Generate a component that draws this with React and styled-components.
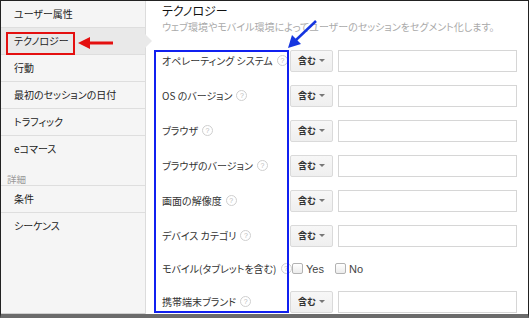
import React from "react";
import styled, {createGlobalStyle} from "styled-components";

const GlobalStyle = createGlobalStyle`
  html, body {
    margin: 0;
    padding: 0;
    background: #fff;
  }
  body {
    font-family: "Noto Sans CJK JP", "Liberation Sans", sans-serif;
    font-feature-settings: "palt";
  }
`

const Frame = styled.div`
  position: relative;
  width: 529px;
  height: 318px;
  box-sizing: border-box;
  border-top: 1px solid #222;
  border-left: 1px solid #222;
  border-right: 1px solid #222;
  border-bottom: 4px solid #6b6b6b;
  display: flex;
  overflow: hidden;
  background: #fff;
`

const Sidebar = styled.div`
  width: 144px;
  flex: none;
  background: #f5f5f5;
  border-right: 1px solid #dcdcdc;
  box-shadow: inset 0 -1px 0 #d0d0d0;
`

const Group = styled.div`
  border-top: ${p => p.$top ? "1px solid #dedede" : "none"};
`

const Item = styled.div`
  position: relative;
  height: 26px;
  line-height: 26px;
  padding-left: 13px;
  font-size: 10px;
  color: #222;
  border-bottom: ${p => p.$last ? "none" : "1px solid #dedede"};
  background: ${p => p.$active ? "#e9e9e9" : "transparent"};

  ${p => p.$active && `
    &::after {
      content: "";
      position: absolute;
      right: -7px;
      top: 6px;
      width: 0;
      height: 0;
      border-top: 7px solid transparent;
      border-bottom: 7px solid transparent;
      border-left: 7px solid #e9e9e9;
    }
  `}
`

const GroupLabel = styled.div`
  height: 23px;
  padding-left: 6px;
  font-size: 9.5px;
  line-height: 12px;
  color: #999;
  display: flex;
  align-items: flex-end;
  box-sizing: border-box;
`

const Main = styled.div`
  flex: 1;
  padding: 3px 0 0 16px;
`

const Title = styled.div`
  font-size: 12px;
  line-height: 14px;
  color: #111;
`

const Subtitle = styled.div`
  font-size: 10px;
  line-height: 14px;
  color: #aaa;
  margin-top: 2px;
  margin-bottom: 9px;
  white-space: nowrap;
`

const Row = styled.div`
  display: flex;
  align-items: center;
  height: ${p => p.$short ? "31px" : "35px"};
`

const Label = styled.div`
  width: 128px;
  flex: none;
  display: flex;
  align-items: center;
  font-size: 10px;
  color: #333;
  white-space: nowrap;
`

const Help = styled.span`
  display: inline-flex;
  align-items: center;
  justify-content: center;
  width: 9px;
  height: 9px;
  margin-left: 4px;
  border: 1px solid #cfcfcf;
  border-radius: 50%;
  font-family: "Liberation Sans", sans-serif;
  font-size: 7px;
  color: #bbb;
  flex: none;
`

const Dropdown = styled.div`
  width: 43px;
  height: 22px;
  box-sizing: border-box;
  border: 1px solid #dadada;
  border-radius: 2px;
  background: linear-gradient(#f7f7f7, #efefef);
  display: flex;
  align-items: center;
  justify-content: space-between;
  padding: 0 7px 0 7px;
  font-size: 9px;
  font-weight: bold;
  color: #333;
  flex: none;
`

const Caret = styled.span`
  width: 0;
  height: 0;
  border-left: 3px solid transparent;
  border-right: 3px solid transparent;
  border-top: 3px solid #777;
`

const Input = styled.div`
  width: 179px;
  height: 22px;
  margin-left: 5px;
  box-sizing: border-box;
  border: 1px solid #d6d6d6;
  background: #fff;
`

const Choice = styled.label`
  display: flex;
  align-items: center;
  margin-left: ${p => p.$first ? "2px" : "11px"};
  font-family: "Liberation Sans", sans-serif;
  font-size: 11px;
  color: #444;
`

const Box = styled.span`
  width: 9px;
  height: 9px;
  margin-right: 3px;
  border: 1px solid #b3b3b3;
  border-radius: 2px;
  background: linear-gradient(#fff, #ececec);
`

const Annotation = styled.div`
  position: absolute;
  left: ${p => p.$x}px;
  top: ${p => p.$y}px;
  width: ${p => p.$w}px;
  height: ${p => p.$h}px;
  box-sizing: border-box;
  border: 2px solid ${p => p.$color};
  pointer-events: none;
`

const Arrows = styled.svg`
  position: absolute;
  left: -1px;
  top: -1px;
  pointer-events: none;
`

const menu = ["ユーザー属性", "テクノロジー", "行動", "最初のセッションの日付", "トラフィック", "eコマース"]
const details = ["条件", "シーケンス"]

const fields = [
    {name: "オペレーティング システム"},
    {name: "OS のバージョン"},
    {name: "ブラウザ"},
    {name: "ブラウザのバージョン"},
    {name: "画面の解像度"},
    {name: "デバイス カテゴリ"},
    {name: "モバイル(タブレットを含む)", check: true},
    {name: "携帯端末ブランド"},
]

const App = () => {
    return (
        <>
            <GlobalStyle/>
            <Frame>
                <Sidebar>
                    <Group>
                        {menu.map((m, i) => (
                            <Item key={m} $active={i === 1} $last={i === menu.length - 1}>{m}</Item>
                        ))}
                    </Group>
                    <GroupLabel>詳細</GroupLabel>
                    <Group $top>
                        {details.map((m, i) => (
                            <Item key={m} $last={i === details.length - 1}>{m}</Item>
                        ))}
                    </Group>
                </Sidebar>
                <Main>
                    <Title>テクノロジー</Title>
                    <Subtitle>ウェブ環境やモバイル環境によってユーザーのセッションをセグメント化します。</Subtitle>
                    {fields.map(f => (
                        <Row key={f.name} $short={f.check}>
                            <Label>{f.name}<Help>?</Help></Label>
                            {f.check ? (
                                <>
                                    <Choice $first><Box/>Yes</Choice>
                                    <Choice><Box/>No</Choice>
                                </>
                            ) : (
                                <>
                                    <Dropdown>含む<Caret/></Dropdown>
                                    <Input/>
                                </>
                            )}
                        </Row>
                    ))}
                </Main>
                <Annotation $x={153} $y={49} $w={135} $h={263} $color="#1020f0"/>
                <Annotation $x={5} $y={31} $w={69} $h={23} $color="#e41010"/>
                <Arrows width="529" height="318" viewBox="0 0 529 318">
                    <line x1="113" y1="43" x2="88" y2="43" stroke="#e41010" strokeWidth="3"/>
                    <polygon points="78,43 90,37 90,49" fill="#e41010"/>
                    <line x1="316" y1="21" x2="296" y2="40" stroke="#1535e0" strokeWidth="2.5"/>
                    <polygon points="288,48 292,35 301,44" fill="#1535e0"/>
                </Arrows>
            </Frame>
        </>
    );
};

export default App;
